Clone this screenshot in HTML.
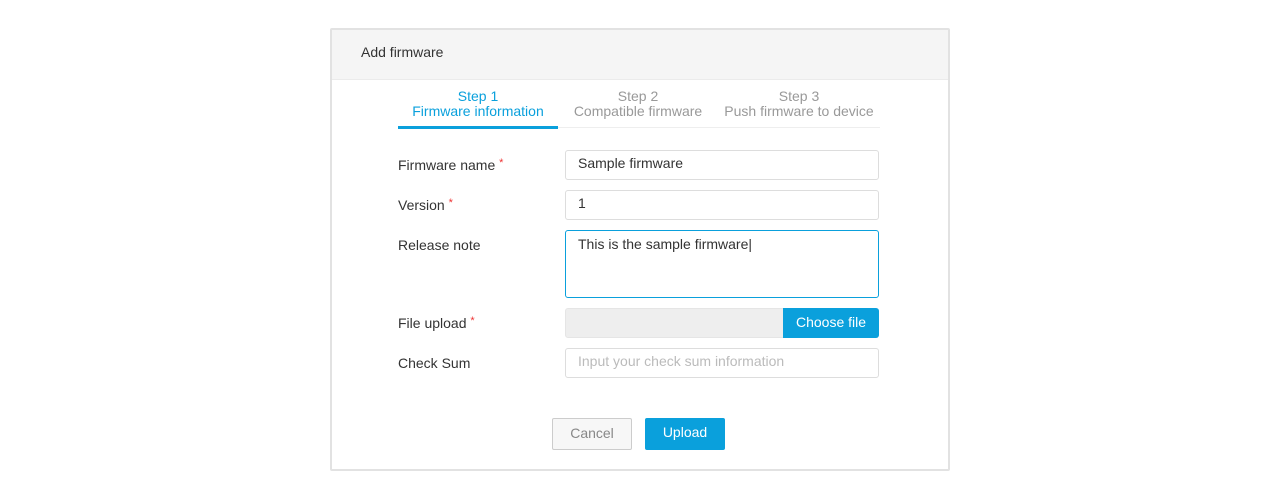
<!DOCTYPE html>
<html><head><style>
body{margin:0;background:#fff;font-family:"Liberation Sans",sans-serif;width:1280px;height:500px;position:relative;overflow:hidden}
.card{position:absolute;left:330px;top:28px;width:616px;height:439px;border:2px solid #e2e2e2;border-radius:2px}
.hdr{height:49px;background:#f5f5f5;border-bottom:1px solid #ebebeb;font-size:14px;color:#333;line-height:45px;padding-left:29px}
.abs{position:absolute}
.tab{position:absolute;top:59px;text-align:center;font-size:14px;line-height:15px;color:#999}
.lbl{position:absolute;left:66px;font-size:14px;color:#333}
.lbl b{color:#e33;font-weight:normal;font-size:11px;vertical-align:top}
.inp{position:absolute;left:233px;width:314px;border:1px solid #ddd;border-radius:3px;font-size:14px;color:#333;box-sizing:border-box;padding-left:12px}
</style></head><body>
<div class="card">
<div class="hdr">Add firmware</div>
<div class="tab" style="left:66px;width:160px;color:#0aa0dc">Step 1<br>Firmware information</div>
<div class="tab" style="left:226px;width:160px">Step 2<br>Compatible firmware</div>
<div class="tab" style="left:386px;width:162px">Step 3<br>Push firmware to device</div>
<div class="abs" style="left:66px;top:97px;width:482px;height:1px;background:#eee"></div>
<div class="abs" style="left:66px;top:96px;width:160px;height:3px;background:#0aa0dc"></div>
<div class="lbl" style="top:127px">Firmware name <b>*</b></div>
<div class="inp" style="top:120px;height:30px;line-height:25px">Sample firmware</div>
<div class="lbl" style="top:167px">Version <b>*</b></div>
<div class="inp" style="top:160px;height:30px;line-height:25px">1</div>
<div class="lbl" style="top:207px">Release note</div>
<div class="inp" style="top:200px;height:68px;border-color:#0aa0dc;padding-top:5px;line-height:16px">This is the sample firmware|</div>
<div class="lbl" style="top:285px">File upload <b>*</b></div>
<div class="inp" style="top:278px;height:30px;background:#eee;border-color:#e5e5e5"></div>
<div class="abs" style="left:451px;top:278px;width:96px;height:30px;background:#0aa0dc;color:#fff;font-size:14px;line-height:28px;text-align:center;border-radius:0 3px 3px 0">Choose file</div>
<div class="lbl" style="top:325px">Check Sum</div>
<div class="inp" style="top:318px;height:30px;line-height:25px;color:#bbb">Input your check sum information</div>
<div class="abs" style="left:220px;top:388px;width:80px;height:32px;box-sizing:border-box;border:1px solid #ccc;background:#f7f7f7;border-radius:2px;color:#888;font-size:14px;text-align:center;line-height:28px">Cancel</div>
<div class="abs" style="left:313px;top:388px;width:80px;height:32px;background:#0aa0dc;border-radius:2px;color:#fff;font-size:14px;text-align:center;line-height:29px">Upload</div>
</div>
</body></html>
